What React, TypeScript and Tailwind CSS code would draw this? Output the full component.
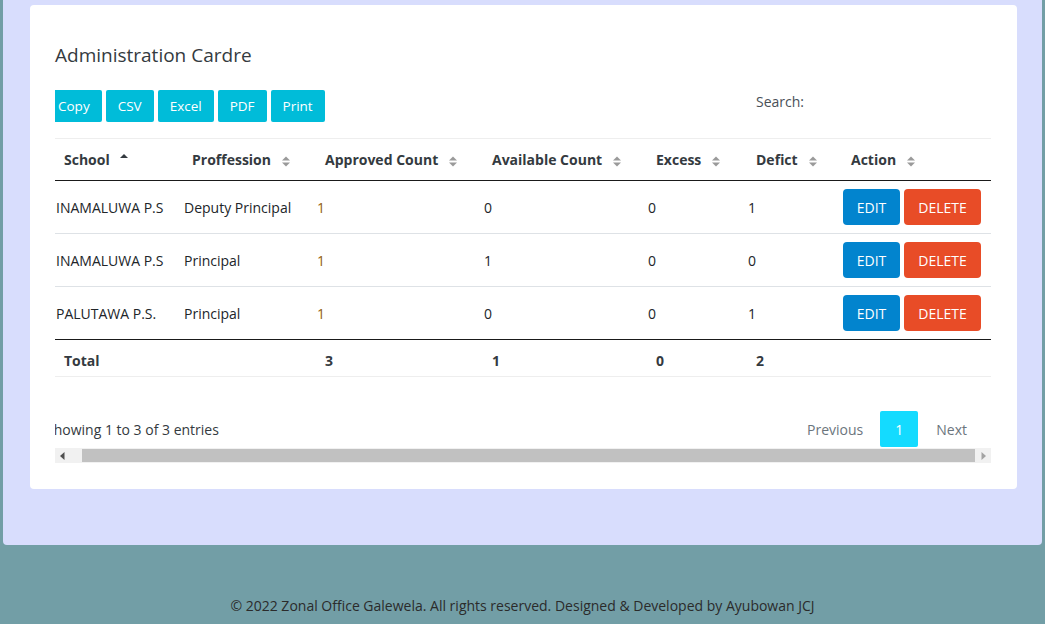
import React from 'react';

const COLS = [128, 133, 167, 164, 100, 95, 158];

const HEADERS = [
  { label: 'School', sort: 'asc' },
  { label: 'Proffession', sort: 'both' },
  { label: 'Approved Count', sort: 'both' },
  { label: 'Available Count', sort: 'both' },
  { label: 'Excess', sort: 'both' },
  { label: 'Defict', sort: 'both' },
  { label: 'Action', sort: 'both' },
];

const ROWS = [
  { school: 'INAMALUWA P.S', profession: 'Deputy Principal', approved: 1, available: 0, excess: 0, deficit: 1 },
  { school: 'INAMALUWA P.S', profession: 'Principal', approved: 1, available: 1, excess: 0, deficit: 0 },
  { school: 'PALUTAWA P.S.', profession: 'Principal', approved: 1, available: 0, excess: 0, deficit: 1 },
];

function SortIcon({ sort }: { sort: string }) {
  if (sort === 'asc') {
    return (
      <svg width="10" height="12" viewBox="0 0 10 12" className="ml-[9px] inline-block -mt-[6px]">
        <path d="M1 6 L5 2 L9 6 Z" fill="#343a40" />
      </svg>
    );
  }
  return (
    <svg width="10" height="13" viewBox="0 0 10 13" className="ml-[10px] inline-block">
      <path d="M1 5.5 L5 1.5 L9 5.5 Z" fill="#9a9a9a" />
      <path d="M1 7.5 L5 11.5 L9 7.5 Z" fill="#9a9a9a" />
    </svg>
  );
}

export default function App() {
  return (
    <div className="min-h-screen bg-[#729ea6] font-['Open_Sans',sans-serif]">
      {/* lavender panel */}
      <div className="mx-[3px] h-[545px] rounded-b-[4px] bg-[#d8ddfd] pl-[27px] pr-[25px] pt-[5px]">
        <div className="h-[484px] rounded-[4px] bg-white pl-[25px] pr-[26px] pt-[37px]">
          <h2 className="text-[19px] leading-[26px] text-[#343a40]">Administration Cardre</h2>

          <div className="overflow-hidden mt-[22px]">
            <div className="-ml-[9px]">
              {/* toolbar */}
              <div className="flex items-start justify-between">
                <div className="flex gap-[4px]">
                  {['Copy', 'CSV', 'Excel', 'PDF', 'Print'].map((b) => (
                    <button
                      key={b}
                      className="h-[32px] rounded-[2px] bg-[#00bcd9] px-[12px] text-[13.5px] text-white"
                    >
                      {b}
                    </button>
                  ))}
                </div>
                <label className="flex items-center text-[14px] text-[#495057] leading-[24px]">
                  Search:
                  <input className="ml-[7px] w-[180px] outline-none" />
                </label>
              </div>

              {/* table */}
              <table className="mt-[16px] w-[945px] table-fixed border-collapse border-t border-r border-[#eeeeee] text-[14px] text-[#212529]">
                <colgroup>
                  {COLS.map((w, i) => (
                    <col key={i} style={{ width: w }} />
                  ))}
                </colgroup>
                <thead>
                  <tr className="h-[42px] border-b border-[#1a1a1a]">
                    {HEADERS.map((h) => (
                      <th key={h.label} className="pl-[18px] text-left font-bold text-[#343a40] whitespace-nowrap">
                        {h.label}
                        <SortIcon sort={h.sort} />
                      </th>
                    ))}
                  </tr>
                </thead>
                <tbody>
                  {ROWS.map((r, i) => (
                    <tr key={i} className={`h-[53px] ${i < ROWS.length - 1 ? 'border-b border-[#dee2e6]' : ''}`}>
                      <td className="pl-[10px] whitespace-nowrap">{r.school}</td>
                      <td className="pl-[10px] whitespace-nowrap">{r.profession}</td>
                      <td className="pl-[10px] text-[#94600f]">{r.approved}</td>
                      <td className="pl-[10px]">{r.available}</td>
                      <td className="pl-[10px]">{r.excess}</td>
                      <td className="pl-[10px]">{r.deficit}</td>
                      <td className="pl-[10px]">
                        <div className="flex gap-[4px]">
                          <button className="h-[36px] w-[57px] rounded-[4px] bg-[#0284ce] text-[14px] text-white">EDIT</button>
                          <button className="h-[36px] w-[77px] rounded-[4px] bg-[#e84c27] text-[14px] text-white">DELETE</button>
                        </div>
                      </td>
                    </tr>
                  ))}
                </tbody>
                <tfoot>
                  <tr className="h-[37px] border-t border-b border-t-[#1a1a1a] border-b-[#eeeeee]">
                    <th className="pl-[18px] pt-[4px] text-left font-bold text-[#343a40]">Total</th>
                    <th></th>
                    <th className="pl-[18px] pt-[4px] text-left font-bold text-[#343a40]">3</th>
                    <th className="pl-[18px] pt-[4px] text-left font-bold text-[#343a40]">1</th>
                    <th className="pl-[18px] pt-[4px] text-left font-bold text-[#343a40]">0</th>
                    <th className="pl-[18px] pt-[4px] text-left font-bold text-[#343a40]">2</th>
                    <th></th>
                  </tr>
                </tfoot>
              </table>

              {/* info + pagination */}
              <div className="mt-[34px] flex items-center justify-between">
                <div className="text-[14px] text-[#343a40]">Showing 1 to 3 of 3 entries</div>
                <div className="flex items-center text-[14px]">
                  <span className="text-[#6c757d]">Previous</span>
                  <span className="ml-[17px] flex h-[36px] w-[38px] items-center justify-center rounded-[2px] bg-[#14dbff] text-white">1</span>
                  <span className="ml-[18px] mr-[24px] text-[#6c757d]">Next</span>
                </div>
              </div>
            </div>
          </div>

          {/* horizontal scrollbar */}
          <div className="mt-px flex h-[15px] items-center bg-[#f1f1f1]">
            <div className="flex w-[15px] justify-center">
              <svg width="5" height="8" viewBox="0 0 5 8">
                <path d="M4.5 0 L0 4 L4.5 8 Z" fill="#505050" />
              </svg>
            </div>
            <div className="ml-[12px] h-[13px] flex-1 bg-[#c1c1c1]" />
            <div className="flex w-[16px] justify-center">
              <svg width="5" height="8" viewBox="0 0 5 8">
                <path d="M0.5 0 L5 4 L0.5 8 Z" fill="#a3a3a3" />
              </svg>
            </div>
          </div>
        </div>
      </div>

      <footer className="h-[79px] pt-[51px] text-center">
        <p className="text-[14px] leading-[20px] text-[#2b2b2b]">
          © 2022 Zonal Office Galewela. All rights reserved. Designed &amp; Developed by Ayubowan JCJ
        </p>
      </footer>
    </div>
  );
}
